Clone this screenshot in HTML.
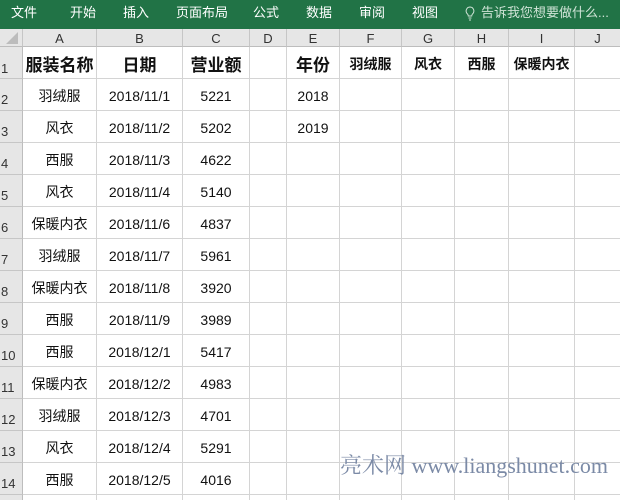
<!DOCTYPE html><html><head><meta charset="utf-8"><style>
html,body{margin:0;width:620px;height:500px;overflow:hidden;background:#fff;font-family:"Liberation Sans","Noto Sans CJK SC",sans-serif;position:relative}
.rb{position:absolute;left:0;top:0;width:620px;height:29px;background:#217346;color:#fff;font-size:13px}
.rb span{position:absolute;top:2px}
.ch{position:absolute;top:29px;height:18px;background:#e6e6e6;border-right:1px solid #c6c6c6;border-bottom:1px solid #bdbdbd;box-sizing:border-box;font-size:13px;text-align:center;line-height:19px;color:#333}
.rh{position:absolute;left:0;width:23px;background:#e6e6e6;border-right:1px solid #bdbdbd;border-bottom:1px solid #c6c6c6;box-sizing:border-box;font-size:13px;color:#333;padding-left:1px;overflow:hidden}
.c{position:absolute;border-right:1px solid #d4d4d4;border-bottom:1px solid #d4d4d4;box-sizing:border-box;text-align:center;font-size:14px;color:#111;white-space:nowrap;overflow:hidden}
.b{font-weight:bold;font-size:17px}
.b2{font-weight:bold;font-size:14px}
</style></head><body>
<div class="rb">
<span style="left:11px">文件</span><span style="left:70px">开始</span><span style="left:123px">插入</span><span style="left:176px">页面布局</span><span style="left:253px">公式</span><span style="left:306px">数据</span><span style="left:359px">审阅</span><span style="left:412px">视图</span>
<svg style="position:absolute;left:465px;top:6px" width="10" height="15" viewBox="0 0 10 15"><path d="M5 1a4 4 0 0 0-2.5 7c.6.6.8 1.2.8 2h3.4c0-.8.2-1.4.8-2A4 4 0 0 0 5 1zM3.5 12h3M4 14h2" fill="none" stroke="#cfe3d6" stroke-width="1"/></svg>
<span style="left:481px;color:#cfe3d6">告诉我您想要做什么...</span>
</div>
<div class="ch" style="left:0;width:23px"><svg width="22" height="17" style="position:absolute;left:0;top:0"><path d="M18 3L18 15L6 15Z" fill="#bcbcbc"/></svg></div>
<div id="g"></div>
<script>
var cols=[23,97,183,250,287,340,402,455,509,575,620],L="ABCDEFGHIJ";
var h='';
for(var i=0;i<10;i++)h+='<div class="ch" style="left:'+cols[i]+'px;width:'+(cols[i+1]-cols[i]+(i==9?1:0))+'px">'+L[i]+'</div>';
var rows=[47,79];for(var r=2;r<=14;r++)rows.push(79+(r-1)*32);rows.push(500);
var data=[["服装名称","日期","营业额","","年份","羽绒服","风衣","西服","保暖内衣",""],
["羽绒服","2018/11/1","5221","","2018"],["风衣","2018/11/2","5202","","2019"],["西服","2018/11/3","4622"],["风衣","2018/11/4","5140"],["保暖内衣","2018/11/6","4837"],["羽绒服","2018/11/7","5961"],["保暖内衣","2018/11/8","3920"],["西服","2018/11/9","3989"],["西服","2018/12/1","5417"],["保暖内衣","2018/12/2","4983"],["羽绒服","2018/12/3","4701"],["风衣","2018/12/4","5291"],["西服","2018/12/5","4016"],[]];
for(var r=0;r<15;r++){var t=rows[r],hh=rows[r+1]-t;var last=r==14;
h+='<div class="rh" style="top:'+t+'px;height:'+hh+'px;line-height:'+(r==0?44:42)+'px;'+(last?'border-bottom:0':'')+'">'+(last?'':(r+1))+'</div>';
for(var c=0;c<10;c++){var v=(data[r]&&data[r][c])||'';var cl='c'+(r==0?(c<5?' b':' b2'):'');
h+='<div class="'+cl+'" style="left:'+cols[c]+'px;top:'+t+'px;width:'+(cols[c+1]-cols[c]+(c==9?1:0))+'px;height:'+hh+'px;line-height:'+(r==0?(c<5?38:34):35)+'px;'+(last?'border-bottom:0':'')+'">'+v+'</div>';}}
document.getElementById('g').innerHTML=h;
</script>
<div style="position:absolute;left:340px;top:449px;font-family:'Liberation Serif','Noto Serif CJK SC',serif;font-size:22px;color:#7b8aa6;white-space:nowrap">亮术网 www.liangshunet.com</div>
</body></html>
